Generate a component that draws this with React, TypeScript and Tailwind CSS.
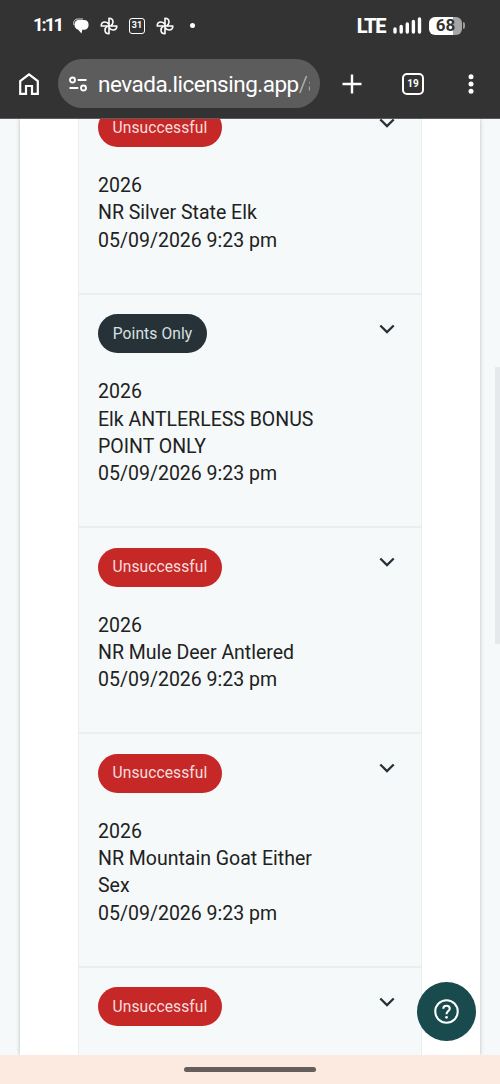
type Status = 'Unsuccessful' | 'Points Only';

interface Application {
  status: Status;
  details?: string[];
}

const applications: Application[] = [
  { status: 'Unsuccessful', details: ['2026', 'NR Silver State Elk', '05/09/2026 9:23 pm'] },
  { status: 'Points Only', details: ['2026', 'Elk ANTLERLESS BONUS', 'POINT ONLY', '05/09/2026 9:23 pm'] },
  { status: 'Unsuccessful', details: ['2026', 'NR Mule Deer Antlered', '05/09/2026 9:23 pm'] },
  { status: 'Unsuccessful', details: ['2026', 'NR Mountain Goat Either', 'Sex', '05/09/2026 9:23 pm'] },
  { status: 'Unsuccessful' },
];

const badgeStyles: Record<Status, string> = {
  Unsuccessful: 'w-[124px] bg-[#c62828] text-[#f8dddd]',
  'Points Only': 'w-[109px] bg-[#263238] text-[#dde0e1]',
};

function Pinwheel() {
  return (
    <svg viewBox="0 0 18 18" className="h-[18px] w-[18px]" fill="none" stroke="#fff" strokeWidth="1.6" strokeLinejoin="round">
      {[0, 90, 180, 270].map((angle) => (
        <path key={angle} d="M9 9V1.2C11.4 1.2 13 2.8 13 4.9C13 6.5 12.2 7.9 10.6 8.9" transform={`rotate(${angle} 9 9)`} />
      ))}
    </svg>
  );
}

function StatusBar() {
  return (
    <div className="flex h-[49px] items-center pt-0.5 text-white">
      <span className="ml-[33px] w-[40px] whitespace-nowrap text-[18.5px] font-bold tracking-[-2px]">1:11</span>
      <svg viewBox="0 0 16 16" className="h-4 w-4" fill="#fff">
        <path d="M6 2H11C14 2 15.6 4 15.6 6.7C15.6 9.7 13.6 11.8 11 11.8H9.3L8.5 15.5L5 11.6C2.8 10.9 1.5 9 1.5 6.7C1.5 4 3 2 6 2Z" />
        <path d="M1 7C-0.2 3.5 1.8 1 5 1H10" fill="none" stroke="#fff" strokeWidth="0.8" />
      </svg>
      <div className="ml-[11px]">
        <Pinwheel />
      </div>
      <div className="ml-[11px] flex h-4 w-4 items-center justify-center rounded-[3px] border-[1.5px] border-white text-[9px] font-bold leading-none">
        31
      </div>
      <div className="ml-[11px]">
        <Pinwheel />
      </div>
      <div className="ml-[16px] h-[5px] w-[5px] rounded-full bg-white" />
      <span className="ml-auto text-[20px] font-extrabold tracking-[-1.4px]">LTE</span>
      <svg viewBox="0 0 29 17" className="ml-[8px] h-[17px] w-[29px]" stroke="#fff" strokeWidth="3.4" strokeLinecap="round">
        <path d="M2 12V15M8.2 9.5V15M14.3 7V15M20.4 4.5V15M26.5 2V15" />
      </svg>
      <div className="ml-[7px] flex h-[18px] w-[33px] items-center justify-center rounded-[6px] bg-[linear-gradient(90deg,#fff_0_72%,#a6a6a6_72%)] text-[17px] font-bold leading-none text-[#333]">
        68
      </div>
      <div className="ml-px mr-[35px] h-[7px] w-[2px] rounded-r bg-[#999]" />
    </div>
  );
}

function BrowserBar() {
  return (
    <div className="flex h-[70px] items-center border-b border-[#5c5c5c] text-white">
      <svg viewBox="0 0 20 22" className="ml-[19px] h-[22px] w-5" fill="none" stroke="#fff" strokeWidth="2.2">
        <path d="M1.2 20.8V8L10 1.4L18.8 8V20.8H13V13H7V20.8Z" />
      </svg>
      <div className="ml-[19px] flex h-[49px] w-[262px] items-center rounded-full bg-[#5c5c5c] pl-[11px]">
        <svg viewBox="0 0 18 16" className="h-4 w-[18px]" fill="none" stroke="#fff" strokeWidth="1.9">
          <circle cx="3.5" cy="4" r="2.5" />
          <path d="M8.7 4H17.5M0.5 12H9.3" />
          <circle cx="14.5" cy="12" r="2.5" />
        </svg>
        <span className="ml-[11px] w-[212px] overflow-hidden whitespace-nowrap text-[22.5px] leading-[30px] tracking-[-0.5px]">
          nevada.licensing.app
          <span className="bg-[linear-gradient(90deg,#aaa_0_8px,#999_12px,#777_16px)] bg-clip-text text-transparent">/a</span>
        </span>
      </div>
      <svg viewBox="0 0 20 20" className="ml-[22px] h-5 w-5" stroke="#fff" strokeWidth="2.4">
        <path d="M0.5 10H19.5M10 0.5V19.5" />
      </svg>
      <div className="ml-[40px] flex h-[22px] w-[22px] items-center justify-center rounded-[5px] border-2 border-white text-[10px] font-bold leading-none">
        19
      </div>
      <svg viewBox="0 0 6 20" className="ml-[44px] h-5 w-1.5" fill="#fff">
        <circle cx="3" cy="2.7" r="2.5" />
        <circle cx="3" cy="10" r="2.5" />
        <circle cx="3" cy="17.3" r="2.5" />
      </svg>
    </div>
  );
}

function ApplicationRow({ status, details }: Application) {
  return (
    <li className="border-t-2 border-[#e9eef1] pb-[38.9px] pl-[19px] pr-[26px] pt-[19.5px]">
      <div className="flex items-start justify-between">
        <span
          className={`flex h-[39px] items-center justify-center rounded-full pt-px text-[15.6px] tracking-[0.08px] ${badgeStyles[status]}`}
        >
          {status}
        </span>
        <svg viewBox="0 0 16 10" className="mt-[9.5px] h-[10px] w-4" fill="none" stroke="#263238" strokeWidth="2.3">
          <path d="M1.3 1.5L8 8.1L14.7 1.5" />
        </svg>
      </div>
      {details && (
        <div className="mt-[25px] text-[19.5px] leading-[27.25px] text-[#212121]">
          {details.map((line) => (
            <p key={line}>{line}</p>
          ))}
        </div>
      )}
    </li>
  );
}

export default function App() {
  return (
    <div className="relative flex h-[1084px] w-[500px] flex-col overflow-hidden bg-[#f5f9fa] font-['Roboto',sans-serif]">
      <header className="h-[119px] shrink-0 bg-[#333]">
        <StatusBar />
        <BrowserBar />
      </header>

      <main className="min-h-0 flex-1 overflow-hidden px-5">
        <div className="flex h-full flex-col bg-white px-[58px] shadow-[0_0_4px_rgba(0,0,0,0.25)]">
          <ul className="-mt-[32.3px] grow border-x border-[#e9eef1] bg-[#f5f9fa]">
            {applications.map((application, index) => (
              <ApplicationRow key={index} {...application} />
            ))}
          </ul>
        </div>
      </main>

      <footer className="z-10 flex h-[29px] shrink-0 items-center justify-center bg-[#fceae0]">
        <div className="h-[5px] w-[132px] rounded-full bg-[#655e5a]" />
      </footer>

      {/* scroll thumb */}
      <div className="absolute right-0 top-[367px] h-[277px] w-[5px] bg-[#e6e9eb]" />

      <button className="absolute left-[417px] top-[982px] flex h-[59px] w-[59px] items-center justify-center rounded-full bg-[#194a4d]">
        <svg viewBox="0 0 24 24" className="h-[25px] w-[25px]" fill="none" stroke="#fff" strokeWidth="2">
          <circle cx="12" cy="12" r="10.8" />
          <path d="M8.9 9.4C8.9 7.7 10.2 6.5 12 6.5C13.8 6.5 15.1 7.6 15.1 9.3C15.1 11.5 12 11.8 12 14.6" />
          <circle cx="12" cy="17.6" r="1.3" fill="#fff" stroke="none" />
        </svg>
      </button>
    </div>
  );
}
